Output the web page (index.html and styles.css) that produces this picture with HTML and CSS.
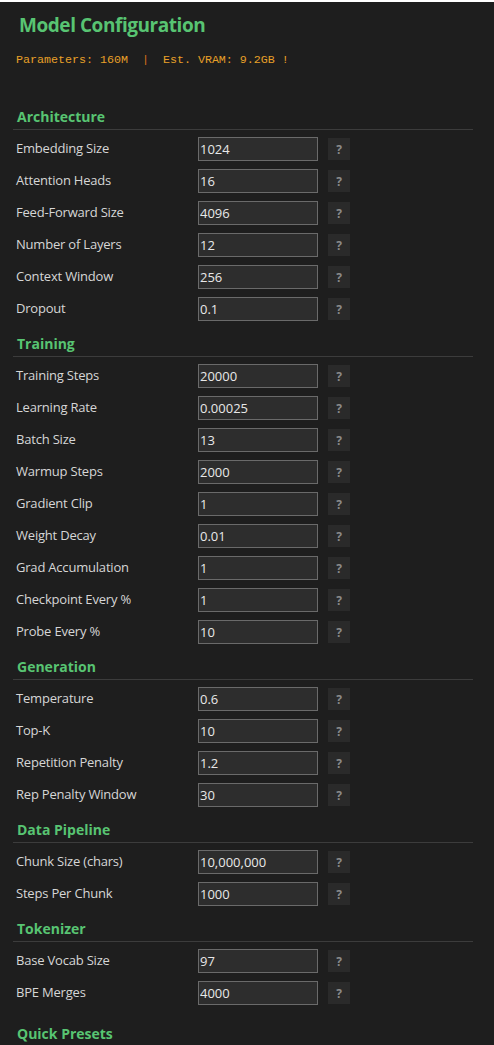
FILE: index.html
```html
<!DOCTYPE html>
<html>
<head>
<meta charset="utf-8">
<link rel="stylesheet" href="styles.css">
</head>
<body>
<div class="panel">
  <h1 class="title">Model Configuration</h1>
  <div class="stats">Parameters: 160M  <span class="sep">|</span>  Est. VRAM: 9.2GB !</div>

  <section class="section first">
    <h2 class="section-title">Architecture</h2>
    <div class="rows">
      <div class="row"><span class="label">Embedding Size</span><input class="field" value="1024"><span class="help">?</span></div>
      <div class="row"><span class="label">Attention Heads</span><input class="field" value="16"><span class="help">?</span></div>
      <div class="row"><span class="label">Feed-Forward Size</span><input class="field" value="4096"><span class="help">?</span></div>
      <div class="row"><span class="label">Number of Layers</span><input class="field" value="12"><span class="help">?</span></div>
      <div class="row"><span class="label">Context Window</span><input class="field" value="256"><span class="help">?</span></div>
      <div class="row"><span class="label">Dropout</span><input class="field" value="0.1"><span class="help">?</span></div>
    </div>
  </section>

  <section class="section">
    <h2 class="section-title">Training</h2>
    <div class="rows">
      <div class="row"><span class="label">Training Steps</span><input class="field" value="20000"><span class="help">?</span></div>
      <div class="row"><span class="label">Learning Rate</span><input class="field" value="0.00025"><span class="help">?</span></div>
      <div class="row"><span class="label">Batch Size</span><input class="field" value="13"><span class="help">?</span></div>
      <div class="row"><span class="label">Warmup Steps</span><input class="field" value="2000"><span class="help">?</span></div>
      <div class="row"><span class="label">Gradient Clip</span><input class="field" value="1"><span class="help">?</span></div>
      <div class="row"><span class="label">Weight Decay</span><input class="field" value="0.01"><span class="help">?</span></div>
      <div class="row"><span class="label">Grad Accumulation</span><input class="field" value="1"><span class="help">?</span></div>
      <div class="row"><span class="label">Checkpoint Every %</span><input class="field" value="1"><span class="help">?</span></div>
      <div class="row"><span class="label">Probe Every %</span><input class="field" value="10"><span class="help">?</span></div>
    </div>
  </section>

  <section class="section">
    <h2 class="section-title">Generation</h2>
    <div class="rows">
      <div class="row"><span class="label">Temperature</span><input class="field" value="0.6"><span class="help">?</span></div>
      <div class="row"><span class="label">Top-K</span><input class="field" value="10"><span class="help">?</span></div>
      <div class="row"><span class="label">Repetition Penalty</span><input class="field" value="1.2"><span class="help">?</span></div>
      <div class="row"><span class="label">Rep Penalty Window</span><input class="field" value="30"><span class="help">?</span></div>
    </div>
  </section>

  <section class="section">
    <h2 class="section-title">Data Pipeline</h2>
    <div class="rows">
      <div class="row"><span class="label">Chunk Size (chars)</span><input class="field" value="10,000,000"><span class="help">?</span></div>
      <div class="row"><span class="label">Steps Per Chunk</span><input class="field" value="1000"><span class="help">?</span></div>
    </div>
  </section>

  <section class="section">
    <h2 class="section-title">Tokenizer</h2>
    <div class="rows">
      <div class="row"><span class="label">Base Vocab Size</span><input class="field" value="97"><span class="help">?</span></div>
      <div class="row"><span class="label">BPE Merges</span><input class="field" value="4000"><span class="help">?</span></div>
    </div>
  </section>

  <section class="section presets">
    <h2 class="section-title">Quick Presets</h2>
  </section>
</div>
</body>
</html>
```

FILE: styles.css
```css
html {
  background: #ffffff;
}
body {
  margin: 0;
  font-family: "Open Sans", "Noto Sans", sans-serif;
}
.panel {
  margin-top: 2px;
  background: #1e1e1e;
  padding: 10px 21px 40px 13px;
  min-height: 1100px;
  box-sizing: border-box;
}
.title {
  margin: 0 0 0 6px;
  font-size: 19px;
  line-height: 26px;
  font-weight: 700;
  letter-spacing: -0.45px;
  color: #58c472;
}
.stats {
  margin: 14px 0 0 3px;
  font-family: "Liberation Mono", "DejaVu Sans Mono", monospace;
  font-size: 11.67px;
  line-height: 16px;
  color: #e8a028;
  white-space: pre;
}
.sep {
  color: #d8701c;
}
.section {
  margin-top: 12px;
}
.section.first {
  margin-top: 38px;
}
.section.presets {
  margin-top: 18px;
}
.section-title {
  margin: 0;
  padding: 1px 0 2px 4px;
  font-size: 14px;
  line-height: 20px;
  font-weight: 700;
  color: #58c472;
  border-bottom: 1px solid #3c3c3c;
}
.rows {
  display: flex;
  flex-direction: column;
  gap: 8px;
  margin-top: 7px;
  padding-left: 3px;
}
.row {
  display: flex;
  align-items: center;
  height: 24px;
}
.label {
  width: 182px;
  flex: none;
  font-size: 13px;
  letter-spacing: -0.2px;
  line-height: 20px;
  padding-bottom: 2px;
  color: #d6d6d6;
}
.field {
  width: 120px;
  height: 24px;
  box-sizing: border-box;
  margin: 0;
  padding: 0 1px 1px;
  border: 1px solid #6a6a6a;
  background: #2d2d2d;
  color: #e8e8e8;
  font-family: "Open Sans", "Noto Sans", sans-serif;
  font-size: 13px;
  outline: none;
}
.help {
  margin-left: 10px;
  width: 22px;
  height: 22px;
  display: flex;
  align-items: center;
  justify-content: center;
  background: #2a2a2a;
  color: #8a8a8a;
  font-size: 12px;
  font-weight: 700;
}
```
